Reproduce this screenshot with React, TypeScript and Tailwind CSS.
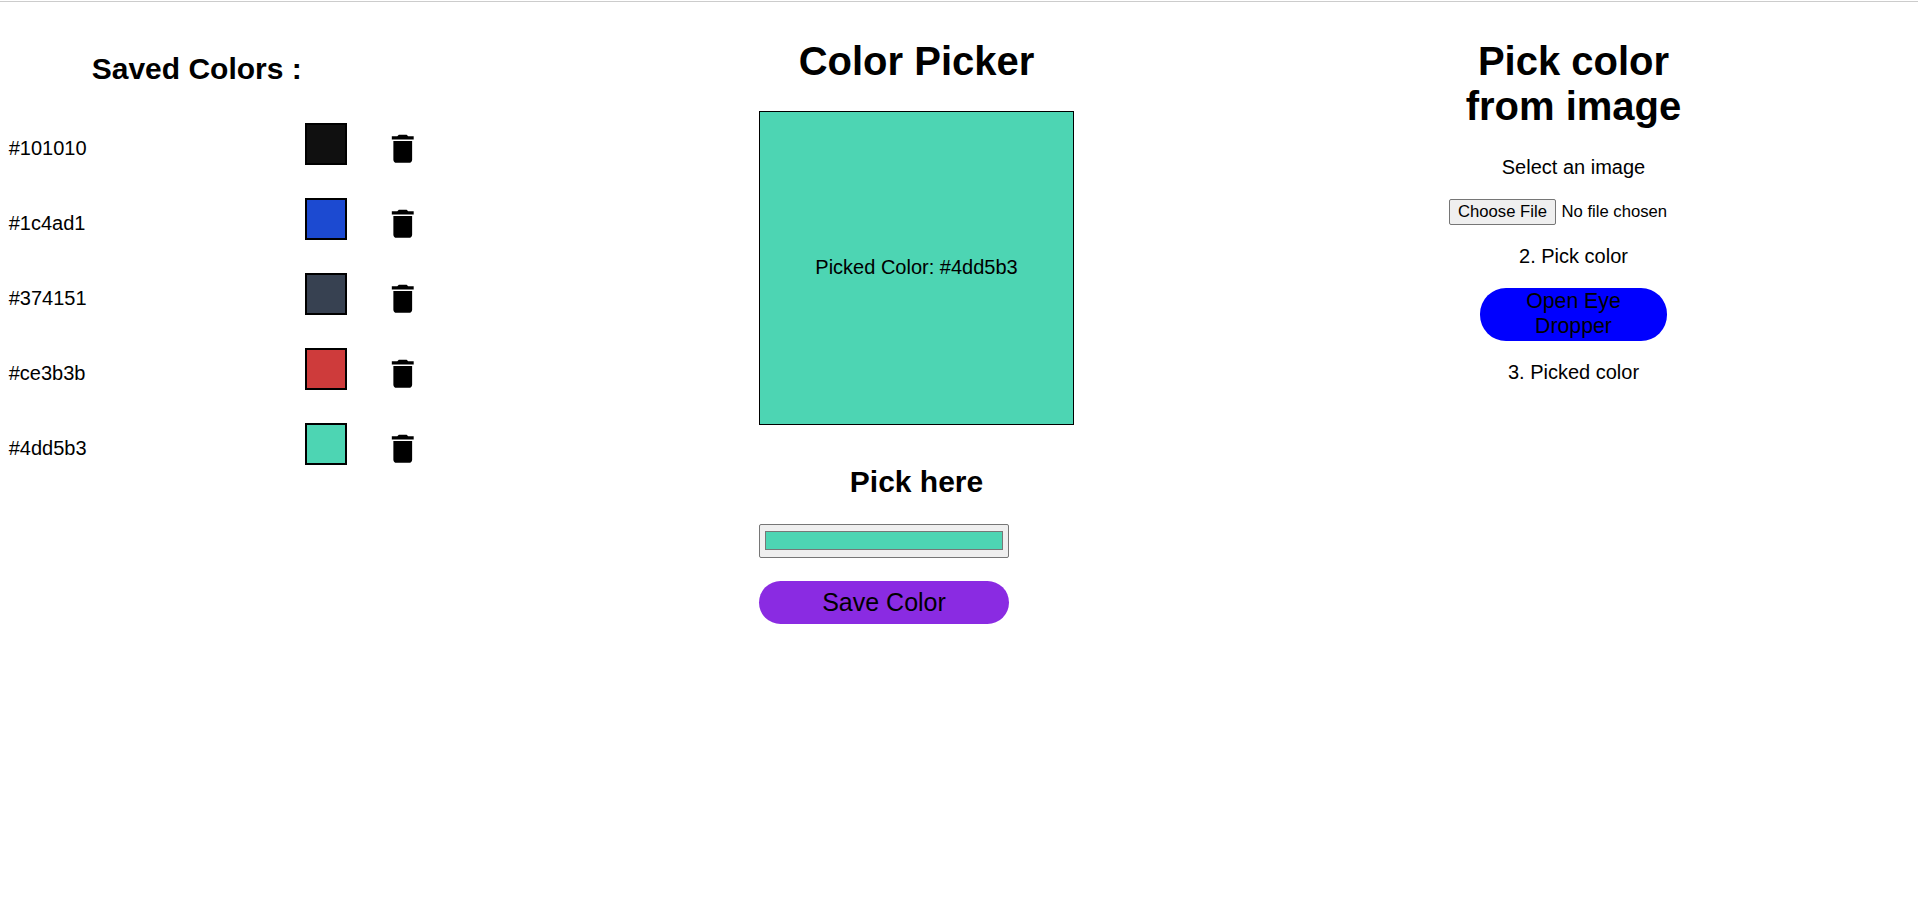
import { useState } from "react";
import { MdDelete } from "react-icons/md";

const initialColors = ["#101010", "#1c4ad1", "#374151", "#ce3b3b", "#4dd5b3"];

function SavedColors({ colors, onDelete }: { colors: string[]; onDelete: (i: number) => void }) {
  return (
    <section className="w-[759px] shrink-0 pt-[50px]">
      <h2 className="w-[393.5px] text-center text-[30px] leading-[33px] font-bold">Saved Colors :</h2>
      <ul className="pt-[38px]">
        {colors.map((color, i) => (
          <li key={color} className="flex h-[75px] items-start">
            <span className="w-[305px] pt-[14px] pl-[8.75px] leading-[22px]">{color}</span>
            <span className="size-[42px] border-2 border-black" style={{ backgroundColor: color }} />
            <button className="mt-[6.8px] ml-[37.25px]" aria-label="Delete" onClick={() => onDelete(i)}>
              <MdDelete className="size-[37.5px]" />
            </button>
          </li>
        ))}
      </ul>
    </section>
  );
}

function Picker({ color }: { color: string }) {
  return (
    <section className="flex w-[315px] shrink-0 flex-col pt-[37px]">
      <h1 className="text-center text-[40px] leading-[45px] font-bold">Color Picker</h1>
      <div
        className="mt-[27px] flex h-[314px] justify-center border border-black pt-[144px] leading-[22px]"
        style={{ backgroundColor: color }}
      >
        Picked Color: {color}
      </div>
      <h2 className="mt-[40px] text-center text-[30px] leading-[33px] font-bold">Pick here</h2>
      <button className="mt-[26px] flex h-[34px] w-[250px] rounded-[2px] border border-[#767676] bg-[#efefef] px-[5px] pt-[6px]" aria-label="Color">
        <span className="h-[19px] w-full border border-[#777777]" style={{ backgroundColor: color }} />
      </button>
      <button className="mt-[23px] h-[43px] w-[250px] rounded-[25px] bg-[blueviolet] pb-px text-[25px] leading-[28px]">
        Save Color
      </button>
    </section>
  );
}

function ImagePicker() {
  return (
    <section className="ml-[375px] flex w-[249px] flex-col items-center pt-[37px] text-center">
      <h1 className="w-[240px] text-[40px] leading-[45px] font-bold">Pick color from image</h1>
      <p className="mt-[27px] leading-[22px]">Select an image</p>
      <div className="mt-[21px] flex h-[26px] w-full items-start text-[16.667px] leading-[19px] whitespace-nowrap">
        <button className="h-[26px] w-[107px] rounded-[2px] border border-[#767676] bg-[#efefef] pb-px">
          Choose File
        </button>
        <span className="mt-[3px] ml-[5.5px]">No file chosen</span>
      </div>
      <p className="mt-[20px] leading-[22px]">2. Pick color</p>
      <button className="mt-[21px] h-[53px] w-[187px] rounded-[26px] bg-[#0000ff] px-[30px] pb-px text-[21.25px] leading-[25px]">
        Open Eye Dropper
      </button>
      <p className="mt-[20px] leading-[22px]">3. Picked color</p>
    </section>
  );
}

export default function App() {
  const [colors, setColors] = useState(initialColors);
  return (
    <main className="min-h-screen bg-white pt-px font-['Liberation_Sans',Arial,sans-serif] text-[20px] text-black">
      <hr className="h-px border-0 bg-[#cccccc]" />
      <div className="flex">
        <SavedColors colors={colors} onDelete={(i) => setColors(colors.filter((_, n) => n !== i))} />
        <Picker color="#4dd5b3" />
        <ImagePicker />
      </div>
    </main>
  );
}
